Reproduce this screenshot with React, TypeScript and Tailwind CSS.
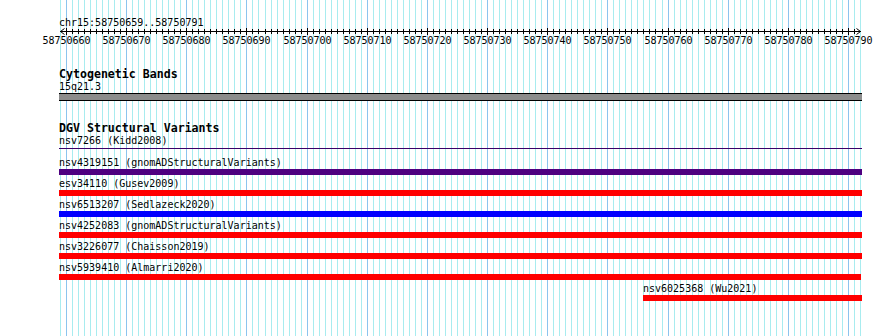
const START = 58750659
const BP = 800 / 133
const gx = (k: number) => Math.round(60 + k * BP)

type Feature = { name: string; source: string; start: number; end: number; color: string; thin?: boolean }

const FEATURES: Feature[] = [
  { name: 'nsv7266', source: 'Kidd2008', start: 59, end: 862, color: '#3a0068', thin: true },
  { name: 'nsv4319151', source: 'gnomADStructuralVariants', start: 59, end: 862, color: '#4e0080' },
  { name: 'esv34110', source: 'Gusev2009', start: 59, end: 862, color: '#ff0000' },
  { name: 'nsv6513207', source: 'Sedlazeck2020', start: 59, end: 862, color: '#0000ff' },
  { name: 'nsv4252083', source: 'gnomADStructuralVariants', start: 59, end: 862, color: '#ff0000' },
  { name: 'nsv3226077', source: 'Chaisson2019', start: 59, end: 862, color: '#ff0000' },
  { name: 'nsv5939410', source: 'Almarri2020', start: 59, end: 861, color: '#ff0000' },
  { name: 'nsv6025368', source: 'Wu2021', start: 643, end: 862, color: '#ff0000' },
]

function Grid() {
  const lines = Array.from({ length: 134 }, (_, k) => k)
  return (
    <svg className="absolute inset-0" width={890} height={336}>
      {lines.map((k) => {
        const major = (START + k) % 10 === 0
        const x = gx(k) + 0.5
        return (
          <line key={k} x1={x} x2={x} y1={0} y2={336} stroke={major ? '#8cc4ee' : '#a8ecef'} strokeWidth={1} />
        )
      })}
    </svg>
  )
}

function Ruler() {
  const ticks = Array.from({ length: 132 }, (_, i) => i + 1)
  return (
    <svg className="block" width={890} height={20}>
      <line x1={60} x2={861} y1={3.5} y2={3.5} stroke="#000" strokeWidth={1} />
      <polyline points="64.5,0.5 60.5,3.5 64.5,6.5" fill="none" stroke="#000" strokeWidth={1} />
      <polyline points="856.5,0.5 860.5,3.5 856.5,6.5" fill="none" stroke="#000" strokeWidth={1} />
      {ticks.map((k) => {
        const major = (START + k) % 10 === 0
        const x = gx(k) + 0.5
        return (
          <line key={k} x1={x} x2={x} y1={major ? 0 : 1} y2={major ? 7 : 6} stroke="#000" strokeWidth={1} />
        )
      })}
      {ticks
        .filter((k) => (START + k) % 10 === 0)
        .map((k) => (
          <text
            key={k}
            x={gx(k) + 0.5}
            y={15.5}
            textAnchor="middle"
            fontSize={10}
            fontFamily="'DejaVu Sans Mono', monospace"
            fill="#000"
          >
            {START + k}
          </text>
        ))}
    </svg>
  )
}

function FeatureRow({ f }: { f: Feature }) {
  return (
    <div className="pb-[3px]">
      <div className="h-[11px] whitespace-pre text-[10px] leading-[11px]" style={{ marginLeft: f.start }}>
        {f.name} ({f.source})
      </div>
      <div className="mt-[1px] h-[6px]" style={{ marginLeft: f.start, width: f.end - f.start }}>
        {f.thin ? (
          <div className="mt-[2px] h-[1px]" style={{ background: f.color }} />
        ) : (
          <div className="h-[6px]" style={{ background: f.color }} />
        )}
      </div>
    </div>
  )
}

export default function App() {
  return (
    <div className="relative h-[336px] w-[890px] overflow-hidden bg-white font-['DejaVu_Sans_Mono',monospace] text-black">
      <Grid />
      <div className="relative pt-[17px]">
        <div className="pl-[59px] text-[10px] leading-[11px]">chr15:58750659..58750791</div>
        <Ruler />

        <div className="mt-[20px]">
          <div className="pl-[59px] text-[11.6px] font-bold leading-[13px]">Cytogenetic Bands</div>
          <div className="pl-[59px] text-[10px] leading-[11px]">15q21.3</div>
          <div className="ml-[59px] mt-[1px] h-[8px] w-[803px] border-y border-black bg-[#8c8c8c]" />
        </div>

        <div className="mt-[21px]">
          <div className="pl-[59px] text-[11.6px] font-bold leading-[13px]">DGV Structural Variants</div>
          {FEATURES.map((f) => (
            <FeatureRow key={f.name} f={f} />
          ))}
        </div>
      </div>
    </div>
  )
}
